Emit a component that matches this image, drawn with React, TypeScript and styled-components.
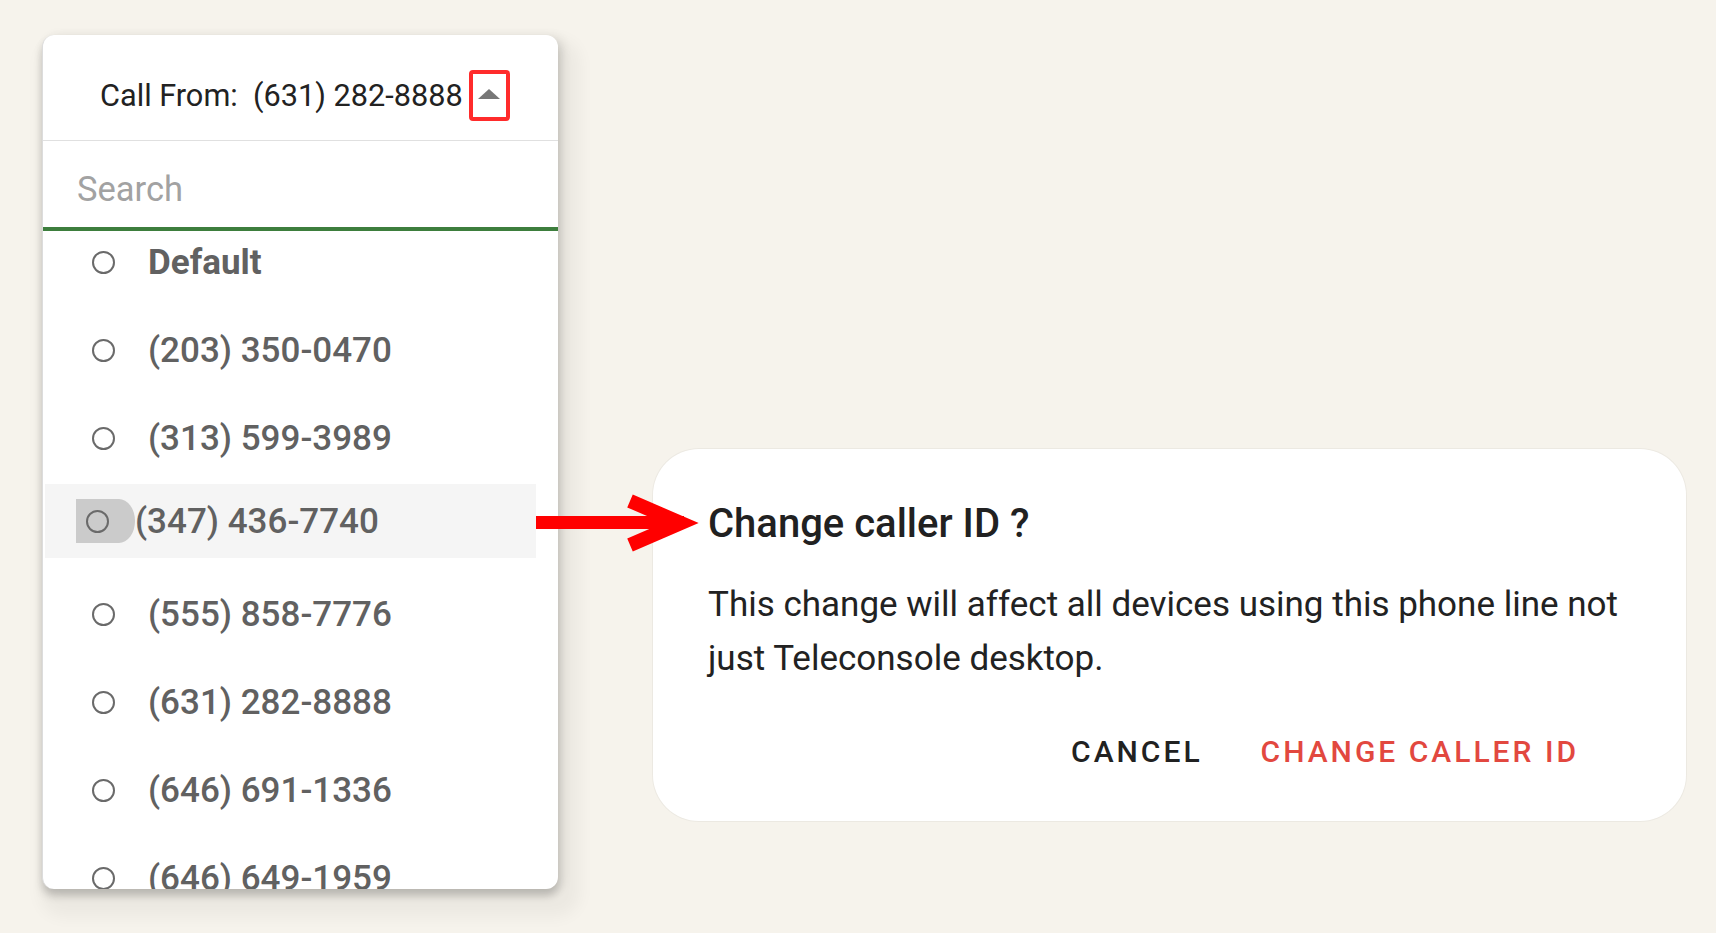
import React from 'react';
import styled, { createGlobalStyle } from 'styled-components';

const GlobalStyle = createGlobalStyle`
  html, body {
    margin: 0;
    padding: 0;
    background: #f6f3ec;
  }
  body {
    font-family: Roboto, "Noto Sans", "Liberation Sans", Arial, sans-serif;
  }
  *, *::before, *::after {
    box-sizing: border-box;
  }
`;

const Page = styled.div`
  position: relative;
  width: 1716px;
  height: 933px;
  overflow: hidden;
  display: flex;
  align-items: flex-start;
  padding: 35px 0 0 42px;
`;

const Picker = styled.div`
  flex-shrink: 0;
  width: 516px;
  height: 854px;
  background: #ffffff;
  border-radius: 12px;
  border-left: 1px solid #dcdcdc;
  box-shadow: 0 7px 9px rgba(0, 0, 0, 0.17), 4px 2px 10px 2px rgba(0, 0, 0, 0.07),
    10px 16px 16px 12px rgba(0, 0, 0, 0.045);
  display: flex;
  flex-direction: column;
  overflow: hidden;
`;

const Header = styled.div`
  flex-shrink: 0;
  height: 106px;
  display: flex;
  align-items: center;
  padding: 16px 0 0 57px;
  border-bottom: 1px solid #e0e0e0;
  font-size: 30.7px;
  color: #222222;
`;

const CallFrom = styled.span`
  white-space: pre;
`;

const Toggle = styled.button`
  margin-left: 6px;
  width: 41px;
  height: 51px;
  border: 4px solid #ff2b2b;
  border-radius: 4px;
  background: transparent;
  padding: 0;
  display: flex;
  align-items: center;
  justify-content: center;
`;

const Caret = styled.span`
  width: 0;
  height: 0;
  border-left: 11px solid transparent;
  border-right: 11px solid transparent;
  border-bottom: 10px solid #777777;
  margin-top: -4px;
`;

const SearchInput = styled.input`
  flex-shrink: 0;
  display: block;
  width: 100%;
  height: 90px;
  border: none;
  border-bottom: 4px solid #3d7e3d;
  padding: 10px 0 0 34px;
  font-family: Roboto, "Noto Sans", Arial, sans-serif;
  font-size: 34.5px;
  color: #333;
  outline: none;
  background: #fff;
  &::placeholder {
    color: #a2a2a2;
  }
`;

const List = styled.div`
  flex: 1;
  overflow: hidden;
`;

const ListInner = styled.div`
  margin-top: -13px;
  display: flex;
  flex-direction: column;
`;

const Row = styled.div<{ $active?: boolean }>`
  display: flex;
  align-items: center;
  height: ${(p) => (p.$active ? '74px' : '88px')};
  margin: ${(p) => (p.$active ? '2px 22px 12px 2px' : '0')};
  padding-left: ${(p) => (p.$active ? '31px' : '49px')};
  gap: ${(p) => (p.$active ? '0' : '33px')};
  background: ${(p) => (p.$active ? '#f5f5f5' : 'transparent')};
  flex-shrink: 0;
`;

const RadioWrap = styled.span<{ $active?: boolean }>`
  display: flex;
  align-items: center;
  width: ${(p) => (p.$active ? '59px' : 'auto')};
  height: ${(p) => (p.$active ? '44px' : 'auto')};
  padding-left: ${(p) => (p.$active ? '10px' : '0')};
  background: ${(p) => (p.$active ? '#cbcbcb' : 'transparent')};
  border-radius: 0 22px 22px 0 / 0 30px 30px 0;
`;

const Radio = styled.span`
  display: block;
  width: 23px;
  height: 23px;
  border: 2px solid #6a6a6a;
  border-radius: 50%;
`;

const Label = styled.span<{ $strong?: boolean }>`
  font-size: 35px;
  font-weight: ${(p) => (p.$strong ? 700 : 500)};
  color: #616161;
  white-space: nowrap;
  line-height: 1;
`;

const Dialog = styled.div`
  flex-shrink: 0;
  margin: 414px 0 0 95px;
  width: 1033px;
  height: 372px;
  background: #ffffff;
  border-radius: 46px;
  box-shadow: 0 0 0 1px rgba(0, 0, 0, 0.04);
  padding: 51px 30px 0 55px;
  display: flex;
  flex-direction: column;
`;

const Title = styled.h2`
  margin: 0;
  font-size: 40px;
  line-height: 48px;
  font-weight: 500;
  color: #212121;
`;

const Body = styled.p`
  margin: 30px 0 0;
  max-width: 948px;
  font-size: 35px;
  line-height: 54px;
  font-weight: 400;
  color: #222222;
`;

const Actions = styled.div`
  margin-top: 40px;
  padding-right: 77px;
  display: flex;
  justify-content: flex-end;
  gap: 58px;
`;

const ActionButton = styled.button<{ $primary?: boolean }>`
  height: 50px;
  padding: 0;
  border: none;
  background: transparent;
  font-family: Roboto, "Noto Sans", Arial, sans-serif;
  font-size: 30px;
  font-weight: 500;
  letter-spacing: 3px;
  color: ${(p) => (p.$primary ? '#e2483f' : '#212121')};
`;

const Arrow = styled.svg`
  position: absolute;
  left: 530px;
  top: 485px;
  width: 180px;
  height: 76px;
  overflow: visible;
`;

const numbers = [
  '(203) 350-0470',
  '(313) 599-3989',
  '(347) 436-7740',
  '(555) 858-7776',
  '(631) 282-8888',
  '(646) 691-1336',
  '(646) 649-1959',
];

export default function App() {
  return (
    <>
      <GlobalStyle />
      <Page>
        <Picker>
          <Header>
            <CallFrom>{'Call From:  (631) 282-8888'}</CallFrom>
            <Toggle aria-label="Toggle">
              <Caret />
            </Toggle>
          </Header>
          <SearchInput placeholder="Search" />
          <List>
            <ListInner>
              <Row>
                <RadioWrap>
                  <Radio />
                </RadioWrap>
                <Label $strong>Default</Label>
              </Row>
              {numbers.map((n) => {
                const active = n === '(347) 436-7740';
                return (
                  <Row key={n} $active={active}>
                    <RadioWrap $active={active}>
                      <Radio />
                    </RadioWrap>
                    <Label>{n}</Label>
                  </Row>
                );
              })}
            </ListInner>
          </List>
        </Picker>
        <Dialog>
          <Title>Change caller ID ?</Title>
          <Body>This change will affect all devices using this phone line not just Teleconsole desktop.</Body>
          <Actions>
            <ActionButton>CANCEL</ActionButton>
            <ActionButton $primary>CHANGE CALLER ID</ActionButton>
          </Actions>
        </Dialog>
        <Arrow viewBox="0 0 180 76">
          <rect x="6" y="31" width="148" height="13" fill="#ff0000" />
          <polyline
            points="100,16 151,38 100,60"
            fill="none"
            stroke="#ff0000"
            strokeWidth="14"
            strokeLinejoin="miter"
            strokeLinecap="butt"
          />
        </Arrow>
      </Page>
    </>
  );
}
